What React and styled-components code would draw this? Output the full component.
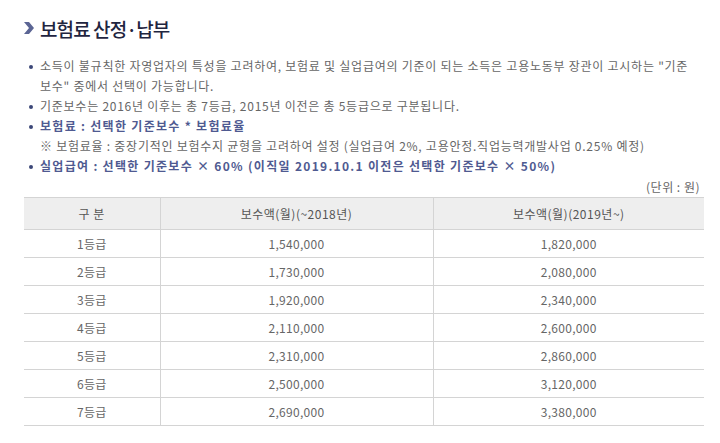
import React from "react";
import styled, { createGlobalStyle } from "styled-components";

const Global = createGlobalStyle`
  html, body { margin: 0; padding: 0; background: #fff; }
  body { font-family: "Noto Sans CJK KR", "Noto Sans", sans-serif; }
`;

const Page = styled.div`
  width: 680px;
  padding: 14px 16px 0 24px;
`;

const Title = styled.h2`
  display: flex;
  align-items: center;
  gap: 6px;
  margin: 0;
  height: 28px;
  font-size: 19px;
  font-weight: 500;
  color: #1f2540;
  letter-spacing: -0.9px;
`;

const List = styled.ul`
  list-style: none;
  margin: 14px 0 0;
  padding: 0;
`;

const Item = styled.li`
  position: relative;
  padding-left: 16px;
  font-size: 12px;
  line-height: 20px;
  color: ${(p) => (p.$strong ? "#4f5a91" : "#666")};
  font-weight: ${(p) => (p.$strong ? 700 : 400)};
  letter-spacing: ${(p) => (p.$strong ? "1.3px" : "0.75px")};
  white-space: nowrap;
  &::before {
    content: "";
    display: ${(p) => (p.$plain ? "none" : "block")};
    position: absolute;
    left: 5px;
    top: 9px;
    width: 4px;
    height: 4px;
    border-radius: 50%;
    background: #3c4778;
  }
`;

const Unit = styled.div`
  text-align: right;
  font-size: 12px;
  color: #666;
  line-height: 20px;
  letter-spacing: 0.5px;
  margin-top: 1px;
  padding-right: 4px;
`;

const Table = styled.table`
  width: 680px;
  border-collapse: collapse;
  margin-top: 0;
  table-layout: fixed;
  font-size: 12px;
  color: #666;
  border-top: 1px solid #d4d4d4;
`;

const Th = styled.th`
  height: 31px;
  background: #eeeeee;
  font-weight: 400;
  color: #555;
  letter-spacing: 0.5px;
  border-bottom: 1px solid #d4d4d4;
  border-left: ${(p) => (p.$first ? "none" : "1px solid #d4d4d4")};
  padding: 0;
`;

const Td = styled.td`
  height: 27px;
  text-align: center;
  letter-spacing: 0.3px;
  border-bottom: 1px solid #d4d4d4;
  border-left: ${(p) => (p.$first ? "none" : "1px solid #d4d4d4")};
  padding: 0;
`;

const Chevron = () => (
  <svg width="10" height="12" viewBox="0 0 10 12">
    <polygon points="0,0 5,0 10,6 5,12 0,12 5,6" fill="#5b6594" />
  </svg>
);

const rows = [
  ["1등급", "1,540,000", "1,820,000"],
  ["2등급", "1,730,000", "2,080,000"],
  ["3등급", "1,920,000", "2,340,000"],
  ["4등급", "2,110,000", "2,600,000"],
  ["5등급", "2,310,000", "2,860,000"],
  ["6등급", "2,500,000", "3,120,000"],
  ["7등급", "2,690,000", "3,380,000"],
];

export default function App() {
  return (
    <Page>
      <Global />
      <Title>
        <Chevron />
        보험료 산정·납부
      </Title>
      <List>
        <Item>
          소득이 불규칙한 자영업자의 특성을 고려하여, 보험료 및 실업급여의 기준이 되는 소득은 고용노동부 장관이 고시하는 "기준
          <br />
          보수" 중에서 선택이 가능합니다.
        </Item>
        <Item>기준보수는 2016년 이후는 총 7등급, 2015년 이전은 총 5등급으로 구분됩니다.</Item>
        <Item $strong>보험료 : 선택한 기준보수 * 보험료율</Item>
        <Item $plain>
          ※ 보험료율 : 중장기적인 보험수지 균형을 고려하여 설정 (실업급여 2%, 고용안정.직업능력개발사업 0.25% 예정)
        </Item>
        <Item $strong>
          실업급여 : 선택한 기준보수 × 60% (이직일 2019.10.1 이전은 선택한 기준보수 × 50%)
        </Item>
      </List>
      <Unit>(단위 : 원)</Unit>
      <Table>
        <colgroup>
          <col style={{ width: "136px" }} />
          <col style={{ width: "273px" }} />
          <col />
        </colgroup>
        <thead>
          <tr>
            <Th $first>구 분</Th>
            <Th>보수액(월)(~2018년)</Th>
            <Th>보수액(월)(2019년~)</Th>
          </tr>
        </thead>
        <tbody>
          {rows.map((r) => (
            <tr key={r[0]}>
              <Td $first>{r[0]}</Td>
              <Td>{r[1]}</Td>
              <Td>{r[2]}</Td>
            </tr>
          ))}
        </tbody>
      </Table>
    </Page>
  );
}
